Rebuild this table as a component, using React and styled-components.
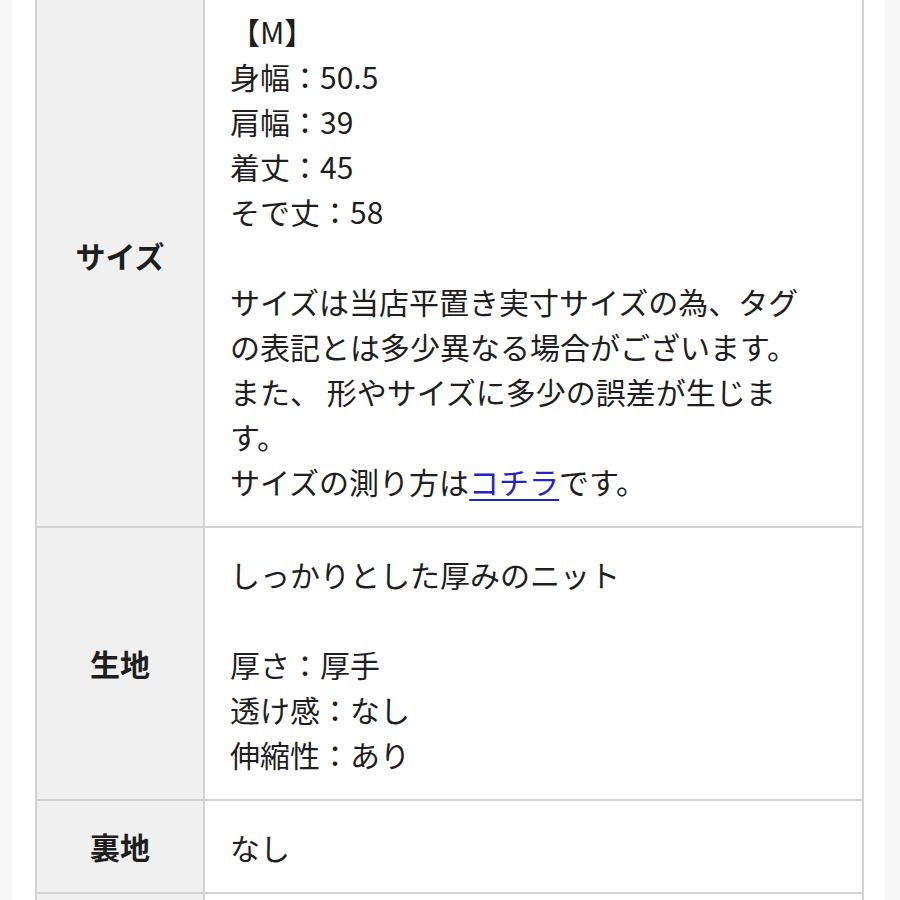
import styled, { createGlobalStyle } from 'styled-components';

const GlobalStyle = createGlobalStyle`
  html, body {
    margin: 0;
    padding: 0;
    background: #f6f6f6;
  }

  body {
    font-family: 'Noto Sans CJK JP', 'Noto Sans', sans-serif;
    color: #1e1e1e;
    overflow: hidden;
  }
`;

const Page = styled.div`
  margin-left: 12px;
  width: 873px;
  min-height: 900px;
  background: #fff;
  padding: 0 21px 0 23px;
  box-sizing: border-box;
`;

const SpecTable = styled.table`
  width: 100%;
  margin-top: -17px;
  border-collapse: collapse;
  table-layout: fixed;
`;

const LabelCol = styled.col`
  width: 168px;
`;

const Row = styled.tr``;

const Label = styled.th`
  background: #f0f0f0;
  border: 2px solid #d2d2d2;
  font-size: 30px;
  line-height: 45px;
  font-weight: 700;
  color: #1e1e1e;
  text-align: center;
  vertical-align: middle;
  padding: 0;
`;

const Value = styled.td`
  background: #fff;
  border: 2px solid #d2d2d2;
  font-size: 30px;
  line-height: 45px;
  font-weight: 400;
  padding: 24px 20px 22px 25px;
  vertical-align: top;
`;

const Line = styled.div`
  white-space: nowrap;
  min-height: 45px;
`;

const Link = styled.a`
  color: #2424c4;
  text-decoration: underline;
  text-underline-offset: 5px;
  text-decoration-thickness: 2px;
`;

const rows = [
  {
    label: 'サイズ',
    lines: [
      '【M】',
      '身幅：50.5',
      '肩幅：39',
      '着丈：45',
      'そで丈：58',
      '',
      'サイズは当店平置き実寸サイズの為、タグ',
      'の表記とは多少異なる場合がございます。',
      'また、 形やサイズに多少の誤差が生じま',
      'す。',
      'link',
    ],
  },
  {
    label: '生地',
    lines: ['しっかりとした厚みのニット', '', '厚さ：厚手', '透け感：なし', '伸縮性：あり'],
  },
  {
    label: '裏地',
    lines: ['なし'],
  },
  {
    label: '',
    lines: [''],
  },
];

export default function App() {
  return (
    <>
      <GlobalStyle />
      <Page>
        <SpecTable>
          <colgroup>
            <LabelCol />
            <col />
          </colgroup>
          <tbody>
            {rows.map((row, i) => (
              <Row key={i}>
                <Label>{row.label}</Label>
                <Value>
                  {row.lines.map((line, j) =>
                    line === 'link' ? (
                      <Line key={j}>
                        サイズの測り方は<Link href="#">コチラ</Link>です。
                      </Line>
                    ) : (
                      <Line key={j}>{line}</Line>
                    )
                  )}
                </Value>
              </Row>
            ))}
          </tbody>
        </SpecTable>
      </Page>
    </>
  );
}
